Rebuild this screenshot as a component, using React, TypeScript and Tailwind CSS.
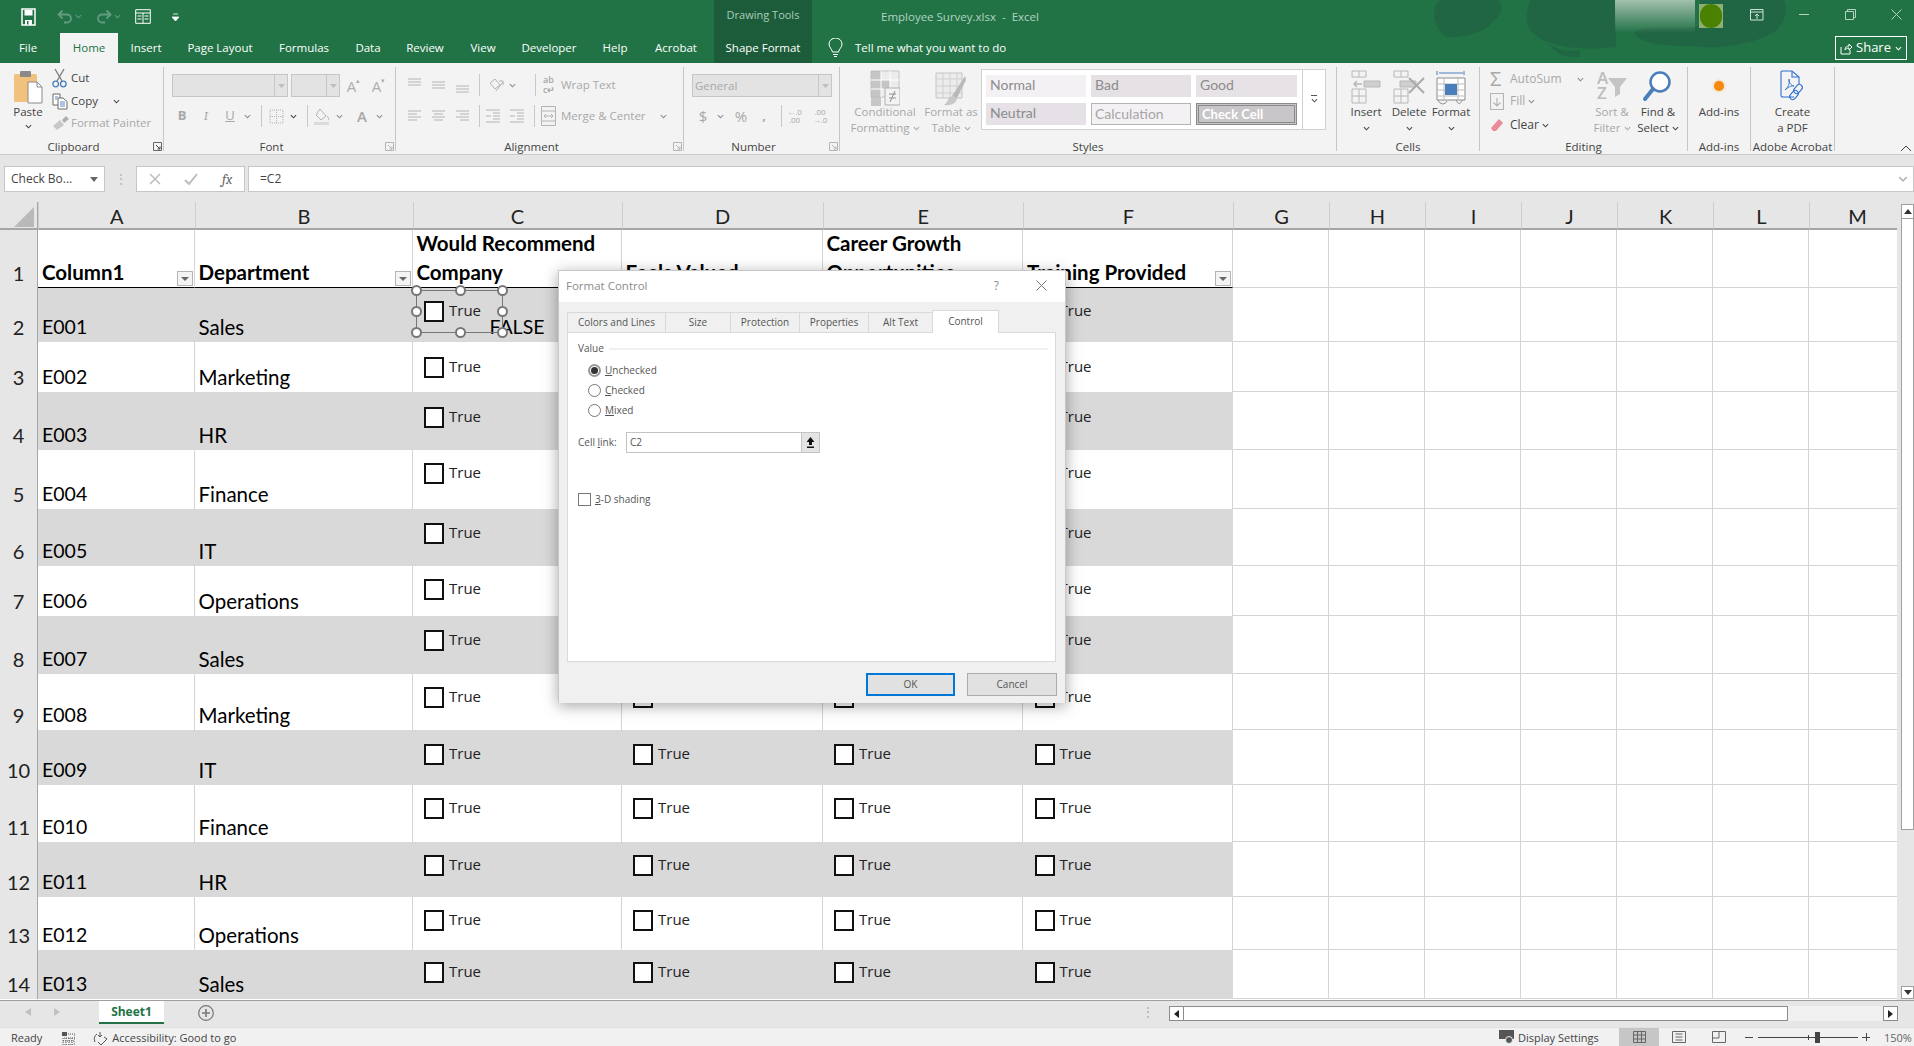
import React from "react";

const G = "#b4b4b4";
const B = "#4a7ebb";

const Caret = ({ c = "#8a8a8a", s = 7 }: { c?: string; s?: number }) => (
  <svg width={s} height={s} viewBox="0 0 8 8" className="shrink-0">
    <path d="M1 2.5 4 5.5 7 2.5" fill="none" stroke={c} strokeWidth="1.2" />
  </svg>
);

const Lines = ({ rows, c = G }: { rows: number[][]; c?: string }) => (
  <svg width="16" height="16" viewBox="0 0 16 16">
    {rows.map((r, i) => (
      <path key={i} d={`M${r[0]} ${r[2]}H${r[1]}`} stroke={c} strokeWidth="1" />
    ))}
  </svg>
);

const Launcher = ({ dark }: { dark?: boolean }) => (
  <svg width="9" height="9" viewBox="0 0 9 9" className="absolute right-[1px] bottom-[3px]">
    <path d="M.5 8.5V.5H8.5V8.5Z" fill="none" stroke={dark ? "#666" : G} />
    <path d="M3 3 7 7M7 4.5V7H4.5" fill="none" stroke={dark ? "#444" : G} />
  </svg>
);

const Sep = () => <div className="w-px h-[84px] mt-[4px] bg-[#c6c6c6] shrink-0" />;
const MiniSep = ({ h = "h-[22px]" }: { h?: string }) => <div className={`w-px ${h} bg-[#c8c8c8] shrink-0`} />;

const Group = ({
  w,
  label,
  launcher,
  dark,
  children,
}: {
  w: string;
  label: string;
  launcher?: boolean;
  dark?: boolean;
  children: React.ReactNode;
}) => (
  <div className={`${w} shrink-0 relative mt-[4px] flex flex-col`}>
    <div className="h-[72px] flex">{children}</div>
    <div className={`h-[16px] text-[11.5px] leading-[17px] text-center text-[#444] whitespace-nowrap ${launcher ? "pr-[16px]" : ""}`}>{label}</div>
    {launcher && <Launcher dark={dark} />}
  </div>
);

const Combo = ({ w, text }: { w: string; text?: string }) => (
  <div className={`${w} h-[23px] bg-[#e3e3e3] border border-[#c6c6c6] flex items-center justify-between shrink-0`}>
    <span className="pl-[2px] text-[11.5px] text-[#a8a8a8]">{text}</span>
    <div className="w-[13px] h-full border-l border-[#c6c6c6] flex items-center justify-center">
      <svg width="7" height="4" viewBox="0 0 7 4">
        <path d="M0 0H7L3.5 4Z" fill="#bdbdbd" />
      </svg>
    </div>
  </div>
);

const BigButton = ({
  w,
  icon,
  l1,
  l2,
  dis,
  caret,
}: {
  w: string;
  icon: React.ReactNode;
  l1: string;
  l2?: string;
  dis?: boolean;
  caret?: boolean;
}) => (
  <div className={`${w} shrink-0 flex flex-col items-center ${dis ? "text-[#a8a8a8]" : "text-[#444]"}`}>
    <div className="h-[38px] pt-[3px] flex justify-center">{icon}</div>
    <div className="h-[16px] leading-[16px] text-[11.5px] whitespace-nowrap mt-[-1px]">{l1}</div>
    <div className="h-[16px] leading-[16px] text-[11.5px] whitespace-nowrap flex items-center justify-center gap-[3px]">
      {l2}
      {caret && <Caret c={dis ? "#a8a8a8" : "#444"} />}
    </div>
  </div>
);

const PasteIcon = () => (
  <svg width="30" height="34" viewBox="0 0 30 34">
    <rect x="1" y="4" width="23" height="28" rx="1.5" fill="#f1c27d" />
    <rect x="7" y="1" width="11" height="6" rx="1" fill="#8a8a8a" />
    <path d="M15 12H24L29 17V33H15Z" fill="#fff" stroke="#8a8a8a" />
    <path d="M24 12V17H29" fill="none" stroke="#8a8a8a" />
  </svg>
);

const CutIcon = () => (
  <svg width="15" height="20" viewBox="0 0 15 20">
    <path d="M3 1 10 13M12 1 5 13" stroke="#7a7a7a" strokeWidth="1.3" />
    <circle cx="3.7" cy="16" r="2.8" fill="none" stroke={B} strokeWidth="1.3" />
    <circle cx="11.3" cy="16" r="2.8" fill="none" stroke={B} strokeWidth="1.3" />
  </svg>
);

const CopyIcon = () => (
  <svg width="16" height="17" viewBox="0 0 16 17">
    <path d="M1 1H8V12H1Z" fill="#fff" stroke="#6a6a6a" />
    <path d="M6 5H11L15 8.5V16H6Z" fill="#fff" stroke="#6a6a6a" />
    <path d="M8 9H13M8 11H13M8 13H13M3 4H6M3 6H5" stroke={B} strokeWidth=".9" />
  </svg>
);

const PainterIcon = () => (
  <svg width="18" height="16" viewBox="0 0 18 16">
    <path d="M1 11 8 5 12 10 5 15Z" fill="#c8c8c8" />
    <path d="M10 5 14 1 17 4 12 8Z" fill="#b0b0b0" />
  </svg>
);

const SaveIcon = () => (
  <svg width="15" height="18" viewBox="0 0 15 18" className="mr-[21px]">
    <path d="M1 1H14V17H1Z" fill="none" stroke="#fff" strokeWidth="1.5" />
    <rect x="3.5" y="2" width="8" height="5.5" fill="#fff" />
    <rect x="4" y="12" width="7" height="5" fill="#fff" />
    <rect x="6" y="13" width="1.5" height="3.5" fill="#217346" />
  </svg>
);

const Arrow = ({ flip }: { flip?: boolean }) => (
  <svg width="16" height="16" viewBox="0 0 16 16" className={flip ? "-scale-x-100" : ""}>
    <path d="M5.5 1.5 1.5 5.5 5.5 9.5M1.5 5.5H10A4 4 0 0 1 10 13.5H7" fill="none" stroke="#659c80" strokeWidth="1.8" />
  </svg>
);

const CondIcon = () => (
  <svg width="30" height="36" viewBox="0 0 30 36">
    <path d="M1 1H29V27H1Z" fill="#ececec" stroke="#c4c4c4" />
    <path d="M1 1H11V36H1ZM11 10H20V19H11Z" fill="#b8b8b8" opacity=".75" />
    <path d="M1 10H29M1 19H29M11 1V27M20 1V27" stroke="#fff" />
    <path d="M15 18H30V35H15Z" fill="#f3f3f3" stroke="#b0b0b0" />
    <path d="M19 24H26M19 28H26M25 21 20 32" stroke="#909090" />
  </svg>
);

const TableIcon = () => (
  <svg width="32" height="36" viewBox="0 0 32 36">
    <path d="M1 3H27V28H1Z" fill="#ececec" stroke="#c4c4c4" />
    <path d="M1 9H27M1 16H27M1 23H27M8 3V28M15 3V28M22 3V28" stroke="#cfcfcf" />
    <path d="M30 6 17 26 22 28 31 10Z" fill="#b9b9b9" />
    <path d="M17 26C12 28 13 33 9 35 16 36 22 33 22 28Z" fill="#c8c8c8" />
  </svg>
);

const InsertIcon = () => (
  <svg width="30" height="34" viewBox="0 0 30 34" fill="none" stroke="#b8b8b8">
    <path d="M1 1H15V7H1ZM8 1V7M1 19H15V33H1ZM1 26H15M8 19V33" />
    <path d="M13 11H29V17H13Z" fill="#cfcfcf" />
    <path d="M11 14H3M6 11 3 14 6 17" strokeWidth="1.5" />
  </svg>
);

const DeleteIcon = () => (
  <svg width="32" height="34" viewBox="0 0 32 34" fill="none" stroke="#b8b8b8">
    <path d="M1 1H15V7H1ZM8 1V7M1 19H15V33H1ZM1 26H15M8 19V33" />
    <path d="M7 11H23V17H7Z" fill="#cfcfcf" />
    <path d="M16 8 31 23M31 8 16 23" strokeWidth="2" stroke="#aaa" />
  </svg>
);

const FormatIcon = () => (
  <svg width="30" height="36" viewBox="0 0 30 36" fill="none">
    <path d="M1 1V5M28 1V5M3 3H27" stroke={B} />
    <path d="M1 8H29V30H1Z" fill="#fff" stroke="#8a8a8a" />
    <path d="M1 14H29M1 20H29M1 26H29M8 8V30M22 8V30" stroke="#bbb" />
    <rect x="9" y="14" width="12" height="11" fill={B} />
    <path d="M2 30C4 35 9 35 11 31M20 30C22 35 25 34 26 30" stroke="#8a8a8a" />
  </svg>
);

const SortIcon = () => (
  <div className="w-[30px] h-[32px] relative flex flex-col text-[#bdbdbd] font-semibold text-[17px] leading-[15px]">
    <span>A</span>
    <span>Z</span>
    <svg width="19" height="20" viewBox="0 0 19 20" className="absolute left-[11px] top-[7px]">
      <path d="M0 1H19L12 10V17L7 20V10Z" fill="#c4c4c4" />
    </svg>
  </div>
);

const MagIcon = () => (
  <svg width="30" height="32" viewBox="0 0 30 32" fill="none" className="mr-[3px]">
    <circle cx="18" cy="12" r="9.5" fill="#fff" stroke={B} strokeWidth="2.5" />
    <path d="M11 19 3 29" stroke={B} strokeWidth="4" strokeLinecap="round" />
  </svg>
);

const PdfIcon = () => (
  <svg width="26" height="32" viewBox="0 0 26 32" fill="none" stroke="#2f6fd0" strokeWidth="1.1">
    <path d="M14 27H3Q1 27 1 25V2Q1 1 2 1H12L19 7V14" />
    <path d="M12 1V7H19" />
    <path d="M5 20C9 17 10 11 9 9 8 11 11 16 14 16 12 15 7 18 5 20Z" strokeWidth=".9" />
    <rect x="15" y="14" width="6" height="10" rx="3" transform="rotate(40 18 19)" />
    <rect x="11" y="20" width="6" height="10" rx="3" transform="rotate(40 14 25)" />
  </svg>
);

const Blobs = () => (
  <svg width="380" height="63" viewBox="0 0 380 63" className="absolute left-[1430px] top-0" fill="#206645">
    <path d="M10 0H68C76 8 70 16 62 22 54 34 30 38 16 37 6 30 -2 10 10 0Z" />
    <path d="M100 0H186V47C160 50 122 50 104 34 92 24 98 8 100 0Z" />
    <path d="M204 32C224 24 250 30 270 26V0H354C360 10 352 30 340 34 322 44 290 50 260 46 236 46 208 44 204 32Z" />
    <path d="M120 44C128 50 134 52 150 50L150 57C136 58 124 54 120 44Z" />
  </svg>
);

const TopBar = () => {
  const tabs = [
    ["File", "w-[56px] mr-[4px]"],
    ["Home", ""],
    ["Insert", "w-[56px]"],
    ["Page Layout", "w-[92px]"],
    ["Formulas", "w-[76px]"],
    ["Data", "w-[52px]"],
    ["Review", "w-[62px]"],
    ["View", "w-[54px]"],
    ["Developer", "w-[78px]"],
    ["Help", "w-[54px]"],
    ["Acrobat", "w-[68px]"],
  ];
  return (
    <div className="relative h-[63px] bg-[#217346] text-white shrink-0 overflow-hidden">
      <Blobs />
      <div className="absolute left-[1615px] top-0 w-[80px] h-[33px] bg-gradient-to-b from-[#a3bfae] to-transparent" />
      <div className="absolute left-[714px] top-0 w-[98px] h-[63px] bg-[#1d5c3a] pt-[7px] text-center text-[11px] text-[#a9cdb9]">
        Drawing Tools
      </div>
      <div className="relative h-[33px] flex items-center pl-[21px]">
        <SaveIcon />
        <Arrow />
        <div className="w-[23px] pl-[2px]"><Caret c="#659c80" /></div>
        <Arrow flip />
        <div className="w-[23px] pl-[2px]"><Caret c="#659c80" /></div>
        <svg width="16" height="15" viewBox="0 0 16 15" className="mr-[21px]">
          <path d="M.7.7H15.3V14.3H.7ZM.7 4H15.3M8 4V14.3M2.5 7H6.5M2.5 10H6.5M9.5 7H13.5M9.5 10H13.5" fill="none" stroke="#fff" />
        </svg>
        <svg width="7" height="8" viewBox="0 0 7 8">
          <path d="M1 1H6M0 4H7L3.5 8Z" stroke="#fff" strokeWidth=".8" fill="#fff" />
        </svg>
        <span className="absolute left-[881px] top-[8px] text-[11.5px] text-[#b3d2c1] whitespace-pre">Employee Survey.xlsx  -  Excel</span>
        <div className="absolute left-[1699px] top-[4px] w-[24px] h-[24px] bg-[#8fae76] flex items-center justify-center">
          <div className="w-[22px] h-[24px] rounded-full bg-[#4b8100]" />
        </div>
        <svg width="14" height="12" viewBox="0 0 14 12" className="absolute left-[1750px] top-[9px]" fill="none" stroke="#cfe3d8">
          <path d="M.5 .5H13V11H.5ZM.5 3H13M7 10V5M5 7 7 5 9 7" />
        </svg>
        <div className="absolute left-[1799px] top-[14px] w-[10px] h-px bg-[#b5d3c3]" />
        <svg width="11" height="11" viewBox="0 0 11 11" className="absolute left-[1845px] top-[9px]" fill="none" stroke="#b5d3c3">
          <path d="M.5 2.5H8.5V10.5H.5ZM2.5 2.5V.5H10.5V8.5H8.5" />
        </svg>
        <svg width="11" height="11" viewBox="0 0 11 11" className="absolute left-[1891px] top-[9px]" stroke="#b5d3c3">
          <path d="M.5 .5 10.5 10.5M10.5 .5 .5 10.5" />
        </svg>
      </div>
      <div className="relative h-[30px] flex text-[11.5px]">
        {tabs.map(([t, c]) =>
          t === "Home" ? (
            <div key={t} className="w-[58px] bg-[#f3f3f3] text-[#217346] flex items-center justify-center">Home</div>
          ) : (
            <div key={t} className={`${c} flex items-center justify-center whitespace-nowrap`}>{t}</div>
          ),
        )}
        <div className="w-[98px] ml-[4px] flex items-center justify-center">Shape Format</div>
        <svg width="15" height="20" viewBox="0 0 15 20" fill="none" stroke="#fff" className="ml-[16px] mt-[5px]">
          <path d="M4.5 14C4 11 1 9.5 1 6A6.5 6 0 0 1 14 6C14 9.5 11 11 10.5 14ZM5 16.500H10M6 18.500H9" />
        </svg>
        <div className="ml-[12px] flex items-center whitespace-nowrap">Tell me what you want to do</div>
        <div className="absolute left-[1835px] top-[3px] w-[72px] h-[24px] border border-white flex items-center justify-center gap-[4px] text-[13px]">
          <svg width="12" height="13" viewBox="0 0 12 13" fill="none" stroke="#fff">
            <path d="M1 5V12H10V8M5 8C5 5 7 4 9 4V2L12 5 9 8V6C7 6 6 7 5 8Z" />
          </svg>
          Share
          <Caret c="#fff" />
        </div>
      </div>
    </div>
  );
};

const A_ = ({ up }: { up?: boolean }) => (
  <div className="w-[25px] flex justify-center items-start text-[#adadad] text-[15px] leading-[22px]">
    A<span className="text-[7px] leading-[12px]">{up ? "▴" : "▾"}</span>
  </div>
);

const Ribbon = () => (
  <div className="h-[92px] bg-[#f3f3f3] border-b border-[#c9c9c9] flex shrink-0 relative">
    <Group w="w-[163px]" label="Clipboard" launcher dark>
      <div className="w-[52px] flex flex-col items-center text-[#444] pl-[4px]">
        <div className="mt-[3px] h-[32px]"><PasteIcon /></div>
        <span className="text-[11.5px] leading-[16px] mt-[2px]">Paste</span>
        <div className="mt-[3px]"><Caret c="#444" /></div>
      </div>
      <div className="flex flex-col text-[11.5px]">
        <div className="h-[22px] flex items-center gap-[4px] text-[#444]"><div className="w-[15px]"><CutIcon /></div>Cut</div>
        <div className="h-[22px] mt-[1px] flex items-center gap-[4px] text-[#444]"><div className="w-[15px]"><CopyIcon /></div>Copy<div className="ml-[11px]"><Caret c="#444" /></div></div>
        <div className="h-[22px] flex items-center gap-[3px] text-[#a8a8a8] whitespace-nowrap"><div className="w-[16px]"><PainterIcon /></div>Format Painter</div>
      </div>
    </Group>
    <Sep />
    <Group w="w-[231px]" label="Font" launcher>
      <div className="pl-[8px] pt-[7px] flex flex-col">
        <div className="flex items-center">
          <Combo w="w-[116px]" />
          <div className="w-[3px]" />
          <Combo w="w-[49px]" />
          <div className="w-[1px]" />
          <A_ up />
          <A_ />
        </div>
        <div className="flex items-center h-[22px] mt-[8px] text-[#a8a8a8] text-[13px]">
          <div className="w-[20px] text-center font-bold">B</div>
          <div className="w-[28px] text-center italic font-serif">I</div>
          <div className="w-[20px] text-center underline">U</div>
          <div className="w-[16px] pl-[4px]"><Caret /></div>
          <div className="w-[5px]" />
          <MiniSep />
          <div className="w-[28px] flex justify-center">
            <svg width="15" height="15" viewBox="0 0 15 15" fill="none" stroke={G} strokeDasharray="1 1"><path d="M1 1H14V14H1ZM1 7.500H14M7.500 1V14" /></svg>
          </div>
          <div className="w-[17px]"><Caret c="#444" /></div>
          <MiniSep />
          <div className="w-[28px] flex justify-center">
            <svg width="16" height="17" viewBox="0 0 16 17" fill="none" stroke={G}><path d="M6 1 12 8 7 12 2 7ZM13 8C15 10 15 12 14 12" /><rect x="0" y="14" width="15" height="3" fill="#dcdcdc" stroke="none" /></svg>
          </div>
          <div className="w-[18px]"><Caret /></div>
          <div className="w-[16px] text-center text-[15px] font-semibold">A</div>
          <div className="w-[16px] pl-[6px]"><Caret /></div>
        </div>
      </div>
    </Group>
    <Sep />
    <Group w="w-[287px]" label="Alignment" launcher>
      <div className="pl-[11px] pt-[5px] flex flex-col">
        <div className="flex items-center h-[26px]">
          <div className="w-[24px]"><Lines rows={[[1, 14, 2], [1, 14, 5], [1, 14, 8]]} /></div>
          <div className="w-[24px]"><Lines rows={[[1, 14, 5], [1, 14, 8], [1, 14, 11]]} /></div>
          <div className="w-[24px]"><Lines rows={[[1, 14, 9], [1, 14, 12], [1, 14, 15]]} /></div>
          <MiniSep />
          <div className="w-[24px] flex justify-end">
            <svg width="17" height="17" viewBox="0 0 17 17" fill="none" stroke={G}><path d="M3 6 8 2 13 8 8 12ZM9 14 16 5M12 4 16 4 16 8" /></svg>
          </div>
          <div className="w-[19px] pl-[5px]"><Caret /></div>
          <div className="w-[12px]" />
          <MiniSep />
          <div className="w-[7px]" />
          <div className="w-[18px] text-[9px] leading-[10px] font-semibold text-[#a8a8a8] whitespace-nowrap">ab<br />c↵</div>
          <span className="text-[11.5px] text-[#a8a8a8] whitespace-nowrap">Wrap Text</span>
        </div>
        <div className="flex items-center h-[26px] mt-[5px]">
          <div className="w-[24px]"><Lines rows={[[1, 14, 3], [1, 10, 6], [1, 14, 9], [1, 10, 12]]} /></div>
          <div className="w-[24px]"><Lines rows={[[1, 14, 3], [3, 12, 6], [1, 14, 9], [3, 12, 12]]} /></div>
          <div className="w-[24px]"><Lines rows={[[1, 14, 3], [5, 14, 6], [1, 14, 9], [5, 14, 12]]} /></div>
          <MiniSep />
          <div className="w-[5px]" />
          <div className="w-[24px]"><Lines rows={[[1, 15, 2], [8, 15, 5], [8, 15, 8], [8, 15, 11], [1, 15, 14], [1, 6, 8]]} /></div>
          <div className="w-[25px]"><Lines rows={[[1, 15, 2], [8, 15, 5], [8, 15, 8], [8, 15, 11], [1, 15, 14], [1, 6, 8]]} /></div>
          <MiniSep />
          <div className="w-[6px]" />
          <svg width="15" height="20" viewBox="0 0 15 20" fill="none" stroke={G} className="mr-[5px]"><path d="M.5 .5H14.500V19.500H.5ZM.5 5H14.500M.5 15H14.500M3 10H12M5 8 3 10 5 12M10 8 12 10 10 12" /></svg>
          <span className="text-[11.5px] text-[#a8a8a8] whitespace-nowrap">Merge &amp; Center</span>
          <div className="ml-[14px]"><Caret /></div>
        </div>
      </div>
    </Group>
    <Sep />
    <Group w="w-[155px]" label="Number" launcher>
      <div className="pl-[8px] pt-[7px] flex flex-col">
        <Combo w="w-[140px]" text="General" />
        <div className="flex items-center h-[22px] mt-[8px] text-[#a8a8a8] text-[13px]">
          <div className="w-[22px] text-center text-[15px]">$</div>
          <div className="w-[15px] pl-[3px]"><Caret /></div>
          <div className="w-[24px] text-center text-[15px]">%</div>
          <div className="w-[22px] text-center font-bold">,</div>
          <div className="w-[6px]" />
          <MiniSep />
          <div className="w-[25px] text-center text-[8px] leading-[8px]">←.0<br />.00</div>
          <div className="w-[26px] text-center text-[8px] leading-[8px]">.00<br />→.0</div>
        </div>
      </div>
    </Group>
    <Sep />
    <Group w="w-[496px]" label="Styles">
      <BigButton w="w-[78px] ml-[6px]" icon={<CondIcon />} l1="Conditional" l2="Formatting" dis caret />
      <BigButton w="w-[54px]" icon={<TableIcon />} l1="Format as" l2="Table" dis caret />
      <div className="ml-[3px] mt-[2px] w-[345px] h-[61px] bg-white border border-[#d0d0d0] flex text-[14px] leading-[20px] font-['Lato',sans-serif] text-[#8c8c8c]">
        <div className="flex-1 grid grid-cols-[100px_100px_101px] gap-x-[5px] gap-y-[6px] pl-[4px] pt-[5px] content-start">
          <div className="h-[22px] pl-[4px] pb-[2px] bg-[#f4f1f5] flex items-center">Normal</div>
          <div className="h-[22px] pl-[4px] pb-[2px] bg-[#e6e1e4] flex items-center">Bad</div>
          <div className="h-[22px] pl-[4px] pb-[2px] bg-[#e6e2e6] flex items-center">Good</div>
          <div className="h-[22px] pl-[4px] pb-[2px] bg-[#e6e1e6] flex items-center">Neutral</div>
          <div className="h-[22px] pl-[3px] pb-[1px] bg-[#f4f1f4] border border-[#b4b4b4] text-[#a6a6a6] flex items-center">Calculation</div>
          <div className="h-[22px] pl-[3px] bg-[#c8c6c8] border-[3px] border-double border-[#8a8a8a] text-white text-[13px] font-bold flex items-center">Check Cell</div>
        </div>
        <div className="w-[23px] border-l border-[#d0d0d0] flex flex-col items-center justify-center">
          <div className="w-[6px] h-px bg-[#555]" />
          <div className="mt-[1px]"><Caret c="#555" /></div>
        </div>
      </div>
    </Group>
    <Sep />
    <Group w="w-[142px]" label="Cells">
      <BigButton w="w-[44px] ml-[7px]" icon={<InsertIcon />} l1="Insert" l2="" caret />
      <BigButton w="w-[42px]" icon={<DeleteIcon />} l1="Delete" l2="" caret />
      <BigButton w="w-[42px]" icon={<FormatIcon />} l1="Format" l2="" caret />
    </Group>
    <Sep />
    <Group w="w-[207px]" label="Editing">
      <div className="w-[107px] pl-[10px] flex flex-col text-[12px] text-[#a8a8a8]">
        <div className="h-[22px] mt-[1px] flex items-center">
          <span className="w-[20px] text-[20px] leading-[20px]">Σ</span>AutoSum<div className="ml-[15px]"><Caret /></div>
        </div>
        <div className="h-[22px] flex items-center">
          <svg width="14" height="17" viewBox="0 0 14 17" fill="none" stroke={G} className="mr-[6px]"><path d="M.5 .5H13.500V16.500H.5ZM7 5V13M3.500 9.500 7 13 10.500 9.500" strokeWidth="1.2" /></svg>
          Fill<div className="ml-[3px]"><Caret /></div>
        </div>
        <div className="h-[22px] mt-[2px] flex items-center text-[#444]">
          <svg width="14" height="14" viewBox="0 0 14 14" className="mr-[6px]"><path d="M9 1 13 5 6 13H3L1 10Z" fill="#ea8a9a" /></svg>
          Clear<div className="ml-[3px]"><Caret c="#444" /></div>
        </div>
      </div>
      <BigButton w="w-[50px]" icon={<SortIcon />} l1="Sort &" l2="Filter" dis caret />
      <BigButton w="w-[42px]" icon={<MagIcon />} l1="Find &" l2="Select" caret />
    </Group>
    <Sep />
    <Group w="w-[62px]" label="Add-ins">
      <BigButton
        w="w-[62px]"
        icon={<div className="mt-[11px] w-[10px] h-[10px] rounded-full bg-[#f48a10] shadow-[0_0_3px_#f9b469]" />}
        l1="Add-ins"
      />
    </Group>
    <Sep />
    <Group w="w-[83px]" label="Adobe Acrobat">
      <BigButton w="w-[83px]" icon={<PdfIcon />} l1="Create" l2="a PDF" />
    </Group>
    <Sep />
    <svg width="12" height="7" viewBox="0 0 12 7" className="absolute left-[1900px] top-[82px]" fill="none" stroke="#444">
      <path d="M1 6 6 1 11 6" />
    </svg>
  </div>
);

const FormulaBar = () => (
  <div className="h-[37px] pt-[11px] flex shrink-0 bg-[#e6e6e6] text-[12px] text-[#444]">
    <div className="ml-[4px] w-[101px] h-[26px] bg-white border border-[#c6c6c6] flex items-center justify-between px-[6px]">
      Check Bo...
      <svg width="8" height="5" viewBox="0 0 8 5"><path d="M0 0H8L4 5Z" fill="#666" /></svg>
    </div>
    <div className="w-[31px] flex items-center justify-center text-[#b0b0b0] leading-none">⋮</div>
    <div className="w-[109px] h-[26px] bg-white border border-[#c6c6c6] flex items-center">
      <svg width="12" height="12" viewBox="0 0 12 12" className="ml-[12px]" stroke="#bdbdbd" strokeWidth="1.5"><path d="M1 1 11 11M11 1 1 11" /></svg>
      <svg width="14" height="12" viewBox="0 0 14 12" className="ml-[23px]" fill="none" stroke="#bdbdbd" strokeWidth="2"><path d="M1 7 5 11 13 1" /></svg>
      <span className="ml-[24px] font-serif italic text-[14px] text-[#666]">fx</span>
    </div>
    <div className="ml-[3px] flex-1 h-[26px] bg-white border border-[#c6c6c6] flex items-center pl-[11px] justify-between pr-[5px]">
      =C2
      <Caret c="#b5b5b5" s={10} />
    </div>
  </div>
);

const cols = ["A", "B", "C", "D", "E", "F", "G", "H", "I", "J", "K", "L", "M"];
const rowData = [
  ["E001", "Sales"],
  ["E002", "Marketing"],
  ["E003", "HR"],
  ["E004", "Finance"],
  ["E005", "IT"],
  ["E006", "Operations"],
  ["E007", "Sales"],
  ["E008", "Marketing"],
  ["E009", "IT"],
  ["E010", "Finance"],
  ["E011", "HR"],
  ["E012", "Operations"],
  ["E013", "Sales"],
];
const boxPad = [
  "pt-[13px]",
  "pt-[15px]",
  "pt-[15px]",
  "pt-[13px]",
  "pt-[14px]",
  "pt-[13px]",
  "pt-[14px]",
  "pt-[13px]",
  "pt-[14px]",
  "pt-[13px]",
  "pt-[13px]",
  "pt-[13px]",
  "pt-[12px]",
];

const Filter = () => (
  <div className="absolute right-[1px] bottom-[1px] w-[16px] h-[15px] bg-[#f4f4f4] border border-[#b4b4b4] flex items-center justify-center">
    <svg width="8" height="4" viewBox="0 0 8 4"><path d="M0 0H8L4 4Z" fill="#666" /></svg>
  </div>
);

const Check = ({ pad }: { pad: string }) => (
  <div className={`h-full pl-[11.500px] ${pad} flex items-start gap-[5px]`}>
    <div className="w-[20px] h-[21px] bg-white border-[2px] border-[#111] shrink-0" />
    <span className="font-['Open_Sans',sans-serif] text-[15px] leading-[18px] text-[#222]">True</span>
  </div>
);

const Handle = ({ c }: { c: string }) => (
  <div className={`absolute ${c} w-[11px] h-[11px] rounded-full bg-white border-[2px] border-[#777]`} />
);

const HeadCell = ({ lines }: { lines: string[] }) => (
  <div className="relative border-r border-[#d4d4d4] border-b-[1.5px] border-b-black bg-white flex flex-col justify-end pl-[4px] font-bold text-[20.500px] leading-[29px] text-black">
    {lines.map((l) => (
      <div key={l} className="whitespace-nowrap">{l}</div>
    ))}
    <Filter />
  </div>
);

const Grid = () => (
  <div className="grid grid-cols-[38px_156.500px_218px_209px_201px_200.500px_210px_96px_96px_96px_96px_96px_96px_89px] grid-rows-[28px_58px_54px_50px_58px_59px_57px_50px_58px_56px_55px_57px_55px_53px_49px] w-[1897px] font-['Lato',sans-serif] bg-white">
    <div className="bg-[#e6e6e6] border-r border-b-[2px] border-[#a6a6a6] relative">
      <svg width="20" height="20" viewBox="0 0 20 20" className="absolute left-[14px] top-[5px]"><path d="M20 0V20H0Z" fill="#b9b9b9" /></svg>
    </div>
    {cols.map((c) => (
      <div key={c} className={`bg-[#e6e6e6] border-l border-[#cdcdcd] border-b-[2px] border-b-[#a6a6a6] flex items-center justify-center pt-[2px] text-[20px] text-[#222] ${c === "M" ? "pl-[7px]" : ""}`}>{c}</div>
    ))}
    <div className="bg-[#e6e6e6] border-r border-[#a6a6a6] flex items-end justify-center pb-[1px] text-[20px] leading-[28px] text-[#222]">1</div>
    <HeadCell lines={["Column1"]} />
    <HeadCell lines={["Department"]} />
    <HeadCell lines={["Would Recommend", "Company"]} />
    <HeadCell lines={["Feels Valued"]} />
    <HeadCell lines={["Career Growth", "Opportunities"]} />
    <HeadCell lines={["Training Provided"]} />
    {cols.slice(6).map((c) => (
      <div key={c} className="border-r border-b border-[#d4d4d4]" />
    ))}
    {rowData.map(([id, dep], i) => {
      const shade = i % 2 === 0;
      const cell = shade ? "bg-[#d9d9d9]" : "bg-white border-r border-[#d4d4d4]";
      return (
        <React.Fragment key={id}>
          <div className="bg-[#e6e6e6] border-r border-[#a6a6a6] flex items-end justify-center pb-[1px] text-[20px] leading-[28px] text-[#222]">{i + 2}</div>
          <div className={`${cell} flex items-end pl-[4px] pb-[1px] text-[19.500px] leading-[28px] text-black`}>{id}</div>
          <div className={`${cell} flex items-end pl-[4px] pb-[1px] text-[20.500px] leading-[28px] text-black`}>{dep}</div>
          <div className={`${cell} relative`}>
            <Check pad={boxPad[i]} />
            {i === 0 && (
              <>
                <div className="absolute inset-x-0 bottom-[1px] text-center text-[19.500px] leading-[28px] text-black">FALSE</div>
                <div className="absolute left-[3px] top-[2px] w-[87px] h-[43px] border border-[#777]">
                  <Handle c="left-[-6px] top-[-6px]" />
                  <Handle c="left-[38px] top-[-6px]" />
                  <Handle c="right-[-6px] top-[-6px]" />
                  <Handle c="left-[-6px] top-[15px]" />
                  <Handle c="right-[-6px] top-[15px]" />
                  <Handle c="left-[-6px] bottom-[-6px]" />
                  <Handle c="left-[38px] bottom-[-6px]" />
                  <Handle c="right-[-6px] bottom-[-6px]" />
                </div>
              </>
            )}
          </div>
          <div className={cell}><Check pad={boxPad[i]} /></div>
          <div className={cell}><Check pad={boxPad[i]} /></div>
          <div className={cell}><Check pad={boxPad[i]} /></div>
          {cols.slice(6).map((c) => (
            <div key={c} className="border-r border-b border-[#d4d4d4]" />
          ))}
        </React.Fragment>
      );
    })}
  </div>
);

const VScroll = () => (
  <div className="w-[17px] pl-[4px] pt-[2px] flex flex-col bg-[#e6e6e6]">
    <div className="h-[15px] bg-white border border-[#a0a0a0] flex items-center justify-center">
      <svg width="8" height="5" viewBox="0 0 8 5"><path d="M0 5H8L4 0Z" fill="#333" /></svg>
    </div>
    <div className="h-[611px] bg-white border-x border-b border-[#a0a0a0]" />
    <div className="h-[156px]" />
    <div className="h-[13px] bg-white border border-[#a0a0a0] flex items-center justify-center">
      <svg width="8" height="5" viewBox="0 0 8 5"><path d="M0 0H8L4 5Z" fill="#333" /></svg>
    </div>
  </div>
);

const SheetTabs = () => (
  <div className="h-[27px] bg-[#e6e6e6] border-t border-[#9e9e9e] flex shrink-0">
    <div className="w-[99px] flex items-center pl-[25px] gap-[23px] pb-[4px]">
      <svg width="6" height="8" viewBox="0 0 6 8"><path d="M6 0V8L0 4Z" fill="#c0c0c0" /></svg>
      <svg width="6" height="8" viewBox="0 0 6 8"><path d="M0 0V8L6 4Z" fill="#c0c0c0" /></svg>
    </div>
    <div className="w-[65px] h-[23px] bg-white border-b-[2px] border-[#217346] flex items-center justify-center text-[12px] font-bold text-[#217346]">Sheet1</div>
    <div className="w-[34px]" />
    <svg width="16" height="16" viewBox="0 0 16 16" className="mt-[4px]" fill="none" stroke="#777">
      <circle cx="8" cy="8" r="7.300" strokeWidth="1.200" />
      <path d="M8 4V12M4 8H12" strokeWidth="1.600" />
    </svg>
    <div className="w-[940px] flex items-center justify-end pb-[4px] text-[12px] leading-none text-[#aaa]">⋮</div>
    <div className="ml-[15px] mt-[5px] w-[15px] h-[15px] bg-white border border-[#8c8c8c] flex items-center justify-center">
      <svg width="5" height="8" viewBox="0 0 5 8"><path d="M5 0V8L0 4Z" fill="#222" /></svg>
    </div>
    <div className="mt-[5px] w-[604px] h-[15px] bg-white border-y border-r border-[#8c8c8c]" />
    <div className="mt-[5px] w-[95px] h-[15px] bg-[#f0f0f0]" />
    <div className="mt-[5px] w-[15px] h-[15px] bg-white border border-[#8c8c8c] flex items-center justify-center">
      <svg width="5" height="8" viewBox="0 0 5 8"><path d="M0 0V8L5 4Z" fill="#222" /></svg>
    </div>
  </div>
);

const StatusBar = () => (
  <div className="h-[19px] pt-[2px] bg-[#f1f1f1] border-t border-[#e0e0e0] flex items-center text-[11px] text-[#444] shrink-0 relative">
    <span className="ml-[11px]">Ready</span>
    <svg width="13" height="13" viewBox="0 0 13 13" className="ml-[20px]" fill="#555">
      <rect x="0" y="0" width="5" height="4" />
      <path d="M6 2H13V13H1V6H13M1 9H13M4 6V13M7 6V13M10 6V13" fill="none" stroke="#555" strokeDasharray="1 1" />
    </svg>
    <svg width="16" height="15" viewBox="0 0 16 15" className="ml-[17px] mr-[4px]" fill="none" stroke="#555">
      <path d="M5 3A6 6 0 0 0 3 11M8 1V6M6 4 8 6 10 4M12 6 15 8M6 11 9 14 15 8" />
    </svg>
    Accessibility: Good to go
    <div className="absolute right-0 top-0 h-[18px] flex items-center">
      <svg width="16" height="15" viewBox="0 0 16 15" className="mr-[3px]" fill="#555">
        <rect x="0" y="0" width="15" height="9" />
        <circle cx="10" cy="10" r="3.500" stroke="#f1f1f1" />
      </svg>
      <span className="w-[101px] pt-[2px]">Display Settings</span>
      <div className="w-[40px] h-[18px] bg-[#c6c6c6] flex items-center justify-center">
        <svg width="13" height="12" viewBox="0 0 13 12" fill="none" stroke="#666"><path d="M.5 .5H12.500V11.500H.5ZM.5 4H12.500M.5 8H12.500M4.500 .5V11.500M8.500 .5V11.500" /></svg>
      </div>
      <div className="w-[40px] flex justify-center">
        <svg width="14" height="12" viewBox="0 0 14 12" fill="none" stroke="#666"><path d="M.5 .5H13.500V11.500H.5ZM3.500 3H10.500M3.500 6H10.500M3.500 9H10.500" /></svg>
      </div>
      <div className="w-[40px] flex justify-center">
        <svg width="14" height="12" viewBox="0 0 14 12" fill="none" stroke="#666"><path d="M.5 .5H13.500V11.500H.5ZM.5 7H7M7 .5V7" /></svg>
      </div>
      <div className="w-[8px] h-px bg-[#444] ml-[6px]" />
      <div className="w-[100px] h-px bg-[#444] ml-[5px] relative">
        <div className="absolute left-[50px] top-[-2px] w-px h-[5px] bg-[#444]" />
        <div className="absolute left-[57px] top-[-5px] w-[5px] h-[11px] bg-[#444]" />
      </div>
      <div className="ml-[4px] w-[8px] relative h-[8px]">
        <div className="absolute left-0 top-[3.500px] w-[8px] h-px bg-[#444]" />
        <div className="absolute left-[3.500px] top-0 w-px h-[8px] bg-[#444]" />
      </div>
      <span className="ml-[14px] mr-[2px] w-[28px] text-[#666] pt-[2px] whitespace-nowrap">150%</span>
    </div>
  </div>
);

const Radio = ({ on, label, u }: { on?: boolean; label: string; u: string }) => (
  <div className="h-[20px] flex items-center pl-[20px]">
    <div className={`w-[13px] h-[13px] rounded-full bg-white flex items-center justify-center ${on ? "border-[2px] border-[#999]" : "border border-[#777]"}`}>
      {on && <div className="w-[7px] h-[7px] rounded-full bg-[#333]" />}
    </div>
    <span className="ml-[4px] text-[#555]"><span className="underline">{u}</span>{label}</span>
  </div>
);

const Dialog = () => {
  const tabs = [
    ["Colors and Lines", "w-[98px]"],
    ["Size", "w-[65px]"],
    ["Protection", "w-[69px]"],
    ["Properties", "w-[69px]"],
    ["Alt Text", "w-[64px]"],
  ];
  return (
    <div className="absolute left-[558px] top-[270px] w-[508px] h-[433px] bg-[#f0f0f0] border-t border-x border-[#c8c8c8] shadow-[0_3px_14px_rgba(0,0,0,0.35)] flex flex-col font-['Open_Sans',sans-serif] text-[10px] text-[#555]">
      <div className="h-[31px] pb-[2px] bg-white flex items-center justify-between pl-[7px] pr-[18px] text-[11.500px] text-[#8c8c8c] shrink-0">
        Format Control
        <div className="flex items-center gap-[37px]">
          <span className="text-[12px]">?</span>
          <svg width="11" height="11" viewBox="0 0 11 11" stroke="#777"><path d="M.5 .5 10.500 10.500M10.500 .5 .5 10.500" /></svg>
        </div>
      </div>
      <div className="h-[22px] mt-[8px] ml-[8px] flex items-end relative z-10 shrink-0">
        {tabs.map(([t, w]) => (
          <div key={t} className={`${w} h-[20px] bg-[#f0f0f0] border-t border-l border-[#d9d9d9] flex items-center justify-center`}>{t}</div>
        ))}
        <div className="w-[67px] h-[23px] mb-[-1px] bg-white border-x border-t border-[#d9d9d9] flex items-center justify-center pb-[2px]">Control</div>
      </div>
      <div className="ml-[8px] w-[489px] h-[330px] bg-white border border-[#d9d9d9] flex flex-col shrink-0">
        <div className="h-[30px] flex items-center pl-[10px] pr-[7px] pt-[1px]">
          Value
          <div className="flex-1 ml-[5px] h-[2px] bg-[#f0f0f0]" />
        </div>
        <div className="mt-[-3px]">
          <Radio on u="U" label="nchecked" />
          <Radio u="C" label="hecked" />
          <Radio u="M" label="ixed" />
        </div>
        <div className="mt-[12px] flex items-center pl-[10px] h-[21px]">
          <span className="w-[48px]">Cell <span className="underline">l</span>ink:</span>
          <div className="w-[194px] h-[21px] bg-white border border-[#c4c4c4] flex items-center justify-between pl-[3px]">
            C2
            <div className="w-[18px] h-full bg-[#e4e4e4] border-l border-[#c4c4c4] flex items-center justify-center">
              <svg width="9" height="11" viewBox="0 0 9 11"><path d="M4.500 0 8.500 5H6V8H3V5H.5ZM1 9.500H8V11H1Z" fill="#111" /></svg>
            </div>
          </div>
        </div>
        <div className="mt-[39px] pl-[10px] flex items-center gap-[4px]">
          <div className="w-[13px] h-[13px] bg-white border border-[#777]" />
          <span><span className="underline">3</span>-D shading</span>
        </div>
      </div>
      <div className="mt-[11px] flex justify-end pr-[8px] gap-[12px]">
        <div className="w-[89px] h-[23px] bg-[#e1e1e1] border-2 border-[#0078d7] flex items-center justify-center">OK</div>
        <div className="w-[90px] h-[23px] bg-[#e1e1e1] border border-[#adadad] flex items-center justify-center">Cancel</div>
      </div>
    </div>
  );
};

export default function App() {
  return (
    <div className="relative w-[1914px] h-[1046px] overflow-hidden flex flex-col bg-[#e6e6e6] font-['Open_Sans',sans-serif]">
      <TopBar />
      <Ribbon />
      <FormulaBar />
      <div className="flex h-[808px] shrink-0 overflow-hidden pt-[10px] bg-[#e6e6e6]">
        <Grid />
        <VScroll />
      </div>
      <SheetTabs />
      <StatusBar />
      <Dialog />
    </div>
  );
}
